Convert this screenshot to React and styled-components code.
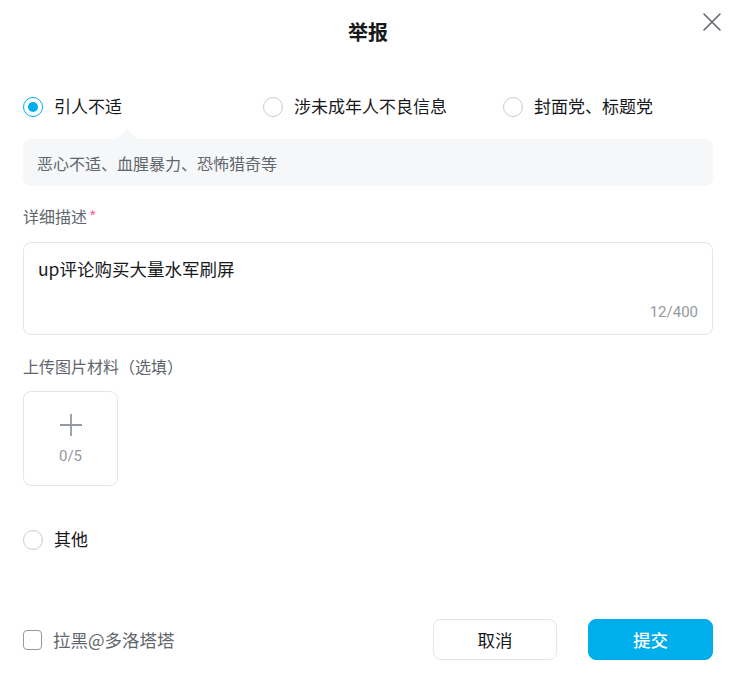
import React from 'react';
import styled, { createGlobalStyle } from 'styled-components';

const GlobalStyle = createGlobalStyle`
  body {
    margin: 0;
    background: #fff;
    font-family: "Noto Sans CJK SC", "Noto Sans", sans-serif;
    color: #18191c;
  }
`;

const Dialog = styled.div`
  position: relative;
  width: 737px;
  height: 688px;
  box-sizing: border-box;
  padding: 0 24px 0 23px;
  background: #fff;
`;

const Header = styled.div`
  height: 66px;
  box-sizing: border-box;
  padding-bottom: 4px;
  display: flex;
  align-items: center;
  justify-content: center;
`;

const Title = styled.h2`
  margin: 0;
  font-size: 20px;
  font-weight: 700;
  color: #18191c;
`;

const Close = styled.button`
  position: absolute;
  top: 10px;
  right: 13px;
  width: 24px;
  height: 24px;
  padding: 0;
  border: none;
  background: none;
  display: flex;
  align-items: center;
  justify-content: center;
`;

const RadioRow = styled.div`
  display: grid;
  grid-template-columns: 240px 240px 1fr;
  margin-top: ${p => p.$top}px;
  height: 24px;
`;

const Option = styled.label`
  display: flex;
  align-items: center;
  gap: 11px;
  font-size: 17px;
  line-height: 22px;
  color: #18191c;
`;

const Circle = styled.span`
  width: 20px;
  height: 20px;
  margin-top: 2px;
  box-sizing: border-box;
  border-radius: 50%;
  border: ${p => (p.$checked ? '1.5px solid #00aeec' : '1px solid #c9ccd0')};
  display: flex;
  align-items: center;
  justify-content: center;
  &::after {
    content: '';
    display: ${p => (p.$checked ? 'block' : 'none')};
    width: 10px;
    height: 10px;
    border-radius: 50%;
    background: #00aeec;
  }
`;

const Tip = styled.div`
  position: relative;
  margin-top: 21px;
  height: 47px;
  box-sizing: border-box;
  padding: 0 14px;
  display: flex;
  align-items: center;
  background: #f6f7f8;
  border-radius: 8px;
  font-size: 16px;
  color: #61666d;
  &::before {
    content: '';
    position: absolute;
    top: -10px;
    left: 94px;
    border: 10px solid transparent;
    border-top: none;
    border-bottom-color: #f6f7f8;
  }
`;

const Label = styled.div`
  margin-top: ${p => p.$top}px;
  height: 20px;
  line-height: 18px;
  font-size: 16px;
  color: #61666d;
`;

const Star = styled.span`
  color: #ff6699;
  margin-left: 2px;
`;

const TextArea = styled.div`
  margin-top: 15px;
  height: 93px;
  box-sizing: border-box;
  border: 1px solid #e3e5e7;
  border-radius: 8px;
  padding: 14px 14px 13px;
  display: flex;
  flex-direction: column;
  justify-content: space-between;
`;

const Typed = styled.div`
  font-size: 17.5px;
  line-height: 24px;
  color: #18191c;
`;

const Counter = styled.div`
  align-self: flex-end;
  font-family: Roboto, "Noto Sans", sans-serif;
  font-size: 15px;
  color: #9499a0;
`;

const Upload = styled.div`
  margin-top: 14px;
  width: 95px;
  height: 95px;
  box-sizing: border-box;
  border: 1px solid #e3e5e7;
  border-radius: 8px;
  display: flex;
  flex-direction: column;
  align-items: center;
  justify-content: center;
  gap: 10px;
`;

const UploadCount = styled.span`
  font-family: Roboto, "Noto Sans", sans-serif;
  font-size: 15px;
  line-height: 18px;
  color: #9499a0;
`;

const Footer = styled.div`
  margin-top: 68px;
  display: flex;
  align-items: center;
`;

const Check = styled.label`
  display: flex;
  align-items: center;
  gap: 11px;
  font-size: 17.5px;
  color: #61666d;
  flex: 1;
`;

const Box = styled.span`
  width: 19px;
  height: 20px;
  box-sizing: border-box;
  border: 1px solid #9499a0;
  border-radius: 4px;
`;

const Button = styled.button`
  width: ${p => p.$w}px;
  height: 41px;
  margin-left: ${p => p.$gap}px;
  border-radius: 8px;
  font-family: "Noto Sans CJK SC", sans-serif;
  font-size: 17.5px;
  cursor: pointer;
  border: 1px solid ${p => (p.$primary ? '#00aeec' : '#e3e5e7')};
  background: ${p => (p.$primary ? '#00aeec' : '#fff')};
  color: ${p => (p.$primary ? '#fff' : '#18191c')};
  font-weight: ${p => (p.$primary ? 500 : 400)};
`;

const reasons = [
  { text: '引人不适', checked: true },
  { text: '涉未成年人不良信息' },
  { text: '封面党、标题党' },
];

export default function App() {
  return (
    <>
      <GlobalStyle />
      <Dialog>
        <Header>
          <Title>举报</Title>
        </Header>
        <Close>
          <svg width="20" height="20" viewBox="0 0 20 20">
            <path d="M2 2 L18 18 M18 2 L2 18" stroke="#61666d" strokeWidth="1.6" strokeLinecap="round" />
          </svg>
        </Close>

        <RadioRow $top={28}>
          {reasons.map(r => (
            <Option key={r.text}>
              <Circle $checked={r.checked} />
              {r.text}
            </Option>
          ))}
        </RadioRow>

        <Tip>恶心不适、血腥暴力、恐怖猎奇等</Tip>

        <Label $top={21}>
          详细描述<Star>*</Star>
        </Label>
        <TextArea>
          <Typed>up评论购买大量水军刷屏</Typed>
          <Counter>12/400</Counter>
        </TextArea>

        <Label $top={22}>上传图片材料（选填）</Label>
        <Upload>
          <svg width="24" height="24" viewBox="0 0 24 24">
            <path d="M12 1 V23 M1 12 H23" stroke="#9499a0" strokeWidth="1.8" />
          </svg>
          <UploadCount>0/5</UploadCount>
        </Upload>

        <RadioRow $top={41}>
          <Option>
            <Circle />
            其他
          </Option>
        </RadioRow>

        <Footer>
          <Check>
            <Box />
            拉黑@多洛塔塔
          </Check>
          <Button $w={124} $gap={0}>取消</Button>
          <Button $w={125} $gap={31} $primary>提交</Button>
        </Footer>
      </Dialog>
    </>
  );
}
